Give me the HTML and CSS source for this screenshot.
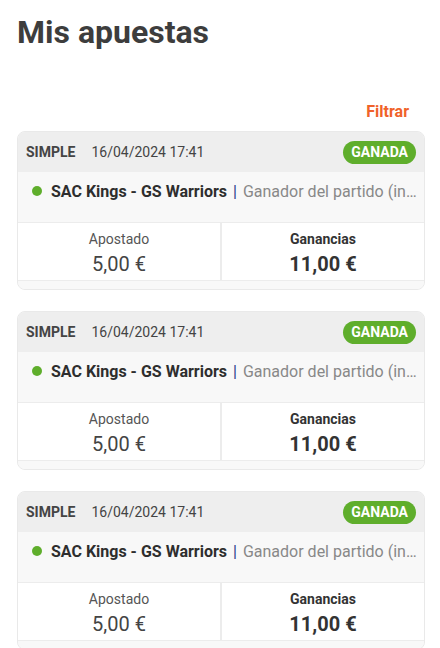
FILE: index.html
```html
<!DOCTYPE html>
<html lang="es">
<head>
    <meta charset="UTF-8">
    <meta name="viewport" content="width=device-width, initial-scale=1.0">
    <title>Mis apuestas</title>
    <link rel="stylesheet" href="styles.css">
</head>
<body>
    <h1 class="title">Mis apuestas</h1>

    <div class="toolbar">
        <a href="#" class="filter">Filtrar</a>
    </div>

    <div class="bets">
        <div class="bet">
            <div class="bet-header">
                <span class="bet-type">SIMPLE</span>
                <span class="bet-date">16/04/2024 17:41</span>
                <span class="badge">GANADA</span>
            </div>
            <div class="bet-body">
                <span class="dot"></span>
                <span class="event">SAC Kings - GS Warriors</span>
                <span class="sep">|</span>
                <span class="market">Ganador del partido (in…</span>
            </div>
            <div class="bet-amounts">
                <div class="amount">
                    <div class="amount-label">Apostado</div>
                    <div class="amount-value">5,00 €</div>
                </div>
                <div class="amount">
                    <div class="amount-label strong">Ganancias</div>
                    <div class="amount-value strong">11,00 €</div>
                </div>
            </div>
            <div class="bet-footer"></div>
        </div>

        <div class="bet">
            <div class="bet-header">
                <span class="bet-type">SIMPLE</span>
                <span class="bet-date">16/04/2024 17:41</span>
                <span class="badge">GANADA</span>
            </div>
            <div class="bet-body">
                <span class="dot"></span>
                <span class="event">SAC Kings - GS Warriors</span>
                <span class="sep">|</span>
                <span class="market">Ganador del partido (in…</span>
            </div>
            <div class="bet-amounts">
                <div class="amount">
                    <div class="amount-label">Apostado</div>
                    <div class="amount-value">5,00 €</div>
                </div>
                <div class="amount">
                    <div class="amount-label strong">Ganancias</div>
                    <div class="amount-value strong">11,00 €</div>
                </div>
            </div>
            <div class="bet-footer"></div>
        </div>

        <div class="bet">
            <div class="bet-header">
                <span class="bet-type">SIMPLE</span>
                <span class="bet-date">16/04/2024 17:41</span>
                <span class="badge">GANADA</span>
            </div>
            <div class="bet-body">
                <span class="dot"></span>
                <span class="event">SAC Kings - GS Warriors</span>
                <span class="sep">|</span>
                <span class="market">Ganador del partido (in…</span>
            </div>
            <div class="bet-amounts">
                <div class="amount">
                    <div class="amount-label">Apostado</div>
                    <div class="amount-value">5,00 €</div>
                </div>
                <div class="amount">
                    <div class="amount-label strong">Ganancias</div>
                    <div class="amount-value strong">11,00 €</div>
                </div>
            </div>
            <div class="bet-footer"></div>
        </div>
    </div>
</body>
</html>
```

FILE: styles.css
```css
body {
    font-family: 'Roboto', 'Liberation Sans', sans-serif;
    background-color: #fff;
    color: #333;
    margin: 0;
    padding: 0 15px 0 17px;
}

.title {
    font-size: 32px;
    font-weight: 700;
    color: #3d3d3d;
    margin: 0;
    padding-top: 12px;
    line-height: 40px;
}

.toolbar {
    display: flex;
    justify-content: flex-end;
    margin-top: 50px;
    padding-right: 16px;
}

.filter {
    color: #f0622a;
    font-weight: 700;
    font-size: 16px;
    text-decoration: none;
    line-height: 20px;
}

.bets {
    display: flex;
    flex-direction: column;
    gap: 21px;
    margin-top: 9px;
}

.bet {
    border: 1px solid #e9e9e9;
    border-radius: 8px;
    overflow: hidden;
    background-color: #f8f8f8;
}

.bet-header {
    display: flex;
    align-items: center;
    height: 40px;
    padding: 0 8px 0 8px;
    background-color: #eeeeee;
    color: #444;
}

.bet-type {
    font-weight: 700;
    font-size: 14px;
}

.bet-date {
    font-size: 14px;
    margin-left: 16px;
}

.badge {
    margin-left: auto;
    background-color: #5fae2c;
    color: #fff;
    font-weight: 700;
    font-size: 14px;
    height: 23px;
    line-height: 23px;
    padding: 0 8px;
    border-radius: 12px;
}

.bet-body {
    display: flex;
    align-items: center;
    height: 50px;
    padding: 0 6px 12px 14px;
    box-sizing: border-box;
    white-space: nowrap;
    background-color: #f8f8f8;
}

.dot {
    flex: none;
    width: 10px;
    height: 10px;
    border-radius: 50%;
    background-color: #5fae2c;
    margin-right: 9px;
}

.event {
    flex: none;
    font-weight: 700;
    font-size: 16px;
    color: #2e2e2e;
}

.sep {
    flex: none;
    color: #2b3a8a;
    font-size: 16px;
    margin: 0 6px;
}

.market {
    font-size: 16px;
    color: #888;
    overflow: hidden;
    min-width: 0;
}

.bet-amounts {
    display: grid;
    grid-template-columns: 1fr 1fr;
    gap: 2px;
    background-color: #ececec;
    border-top: 1px solid #ececec;
    border-bottom: 1px solid #ececec;
}

.amount {
    background-color: #fff;
    text-align: center;
    height: 57px;
    padding-top: 7px;
    box-sizing: border-box;
}

.amount-label {
    font-size: 14px;
    color: #555;
    line-height: 18px;
}

.amount-value {
    font-size: 20px;
    color: #444;
    line-height: 26px;
    margin-top: 3px;
}

.strong {
    font-weight: 700;
    color: #333;
}

.bet-footer {
    height: 8px;
    background-color: #f8f8f8;
}
```
